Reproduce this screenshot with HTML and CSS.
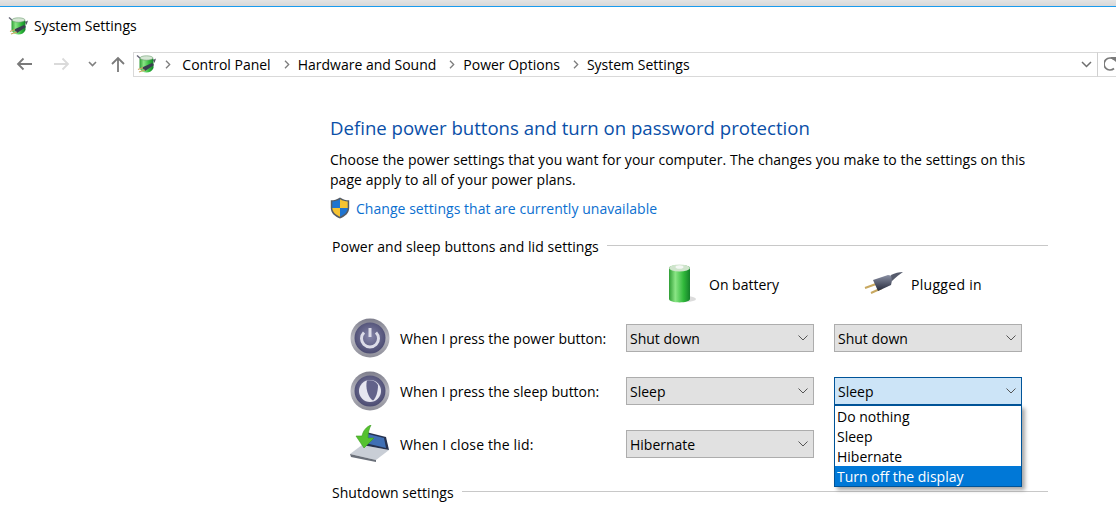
FILE: index.html
```html
<!DOCTYPE html>
<html lang="en">
<head>
    <meta charset="UTF-8">
    <title>System Settings</title>
    <link rel="stylesheet" href="styles.css">
</head>
<body>
    <svg class="defs" width="0" height="0">
        <defs>
            <linearGradient id="green" x1="0" x2="1" y1="0" y2="0">
                <stop offset="0" stop-color="#2f9e35"/>
                <stop offset="0.3" stop-color="#8ae585"/>
                <stop offset="0.7" stop-color="#2fb83a"/>
                <stop offset="1" stop-color="#14802a"/>
            </linearGradient>
            <linearGradient id="ring" x1="0" x2="0" y1="0" y2="1">
                <stop offset="0" stop-color="#7e7e8c"/>
                <stop offset="0.5" stop-color="#b8b8c0"/>
                <stop offset="1" stop-color="#8d8d98"/>
            </linearGradient>
            <radialGradient id="disc" cx="0.5" cy="0.45" r="0.6">
                <stop offset="0" stop-color="#8686aa"/>
                <stop offset="1" stop-color="#46466c"/>
            </radialGradient>
            <linearGradient id="plug" x1="0" x2="0" y1="0" y2="1">
                <stop offset="0" stop-color="#8a90a4"/>
                <stop offset="1" stop-color="#262a3a"/>
            </linearGradient>
            <symbol id="app-icon" viewBox="0 0 20 20">
                <path d="M1 1.500 L5 5" stroke="#667" stroke-width="1.400" fill="none"/>
                <path d="M3.500 5 C6 2 15 2 17.500 5 L17.500 14 C15 20 6 20 3.500 14 Z" fill="url(#green)"/>
                <ellipse cx="10.500" cy="4" rx="6.500" ry="2.200" fill="#d5e6d4" stroke="#6b9c6e" stroke-width="0.600"/>
                <path d="M17 6 L20 4.500 L18.500 9 Z" fill="#556"/>
                <path d="M6 13.500 L16 9 L18 11 L9 17 Z" fill="#3a3f50"/>
                <path d="M2 15.500 L7 13.500 M3 18 L9 16" stroke="#c9a860" stroke-width="1.300"/>
            </symbol>
        </defs>
    </svg>

    <div class="top-edge"></div>

    <div class="title-row">
        <svg class="app-icon" width="20" height="20"><use href="#app-icon"/></svg>
        <span>System Settings</span>
    </div>

    <div class="nav-row">
        <div class="nav-buttons">
            <svg class="nav-back" width="16" height="14" viewBox="0 0 16 14"><path d="M16 7H2M7.500 1.500 2 7l5.500 5.500" fill="none" stroke="#7a7a7a" stroke-width="1.800"/></svg>
            <svg class="nav-forward" width="16" height="14" viewBox="0 0 16 14"><path d="M0 7H14M8.500 1.500 14 7l-5.500 5.500" fill="none" stroke="#dadada" stroke-width="1.800"/></svg>
            <svg class="nav-down" width="9" height="6" viewBox="0 0 9 6"><path d="M1 1l3.500 3.500L8 1" fill="none" stroke="#808080" stroke-width="1.600"/></svg>
            <svg class="nav-up" width="14" height="16" viewBox="0 0 14 16"><path d="M7 16V2M1 8l6-6 6 6" fill="none" stroke="#7a7a7a" stroke-width="1.800"/></svg>
        </div>
        <div class="address">
            <svg class="address-icon" width="20" height="20"><use href="#app-icon"/></svg>
            <svg class="crumb-sep first" width="6" height="9" viewBox="0 0 6 9"><path d="M1 .7l3.700 3.800L1 8.300" fill="none" stroke="#7d7d7d" stroke-width="1.300"/></svg>
            <span class="crumb">Control Panel</span>
            <svg class="crumb-sep" width="6" height="9" viewBox="0 0 6 9"><path d="M1 .7l3.700 3.800L1 8.300" fill="none" stroke="#7d7d7d" stroke-width="1.300"/></svg>
            <span class="crumb">Hardware and Sound</span>
            <svg class="crumb-sep" width="6" height="9" viewBox="0 0 6 9"><path d="M1 .7l3.700 3.800L1 8.300" fill="none" stroke="#7d7d7d" stroke-width="1.300"/></svg>
            <span class="crumb">Power Options</span>
            <svg class="crumb-sep" width="6" height="9" viewBox="0 0 6 9"><path d="M1 .7l3.700 3.800L1 8.300" fill="none" stroke="#7d7d7d" stroke-width="1.300"/></svg>
            <span class="crumb">System Settings</span>
            <svg class="address-chevron" width="11" height="7" viewBox="0 0 11 7"><path d="M1 1l4.500 4.500L10 1" fill="none" stroke="#6e6e6e" stroke-width="1.500"/></svg>
        </div>
        <div class="refresh">
            <svg width="12" height="16" viewBox="0 0 12 16"><path d="M10 3.500A6 6 0 1 0 10 12.500" fill="none" stroke="#7a7a7a" stroke-width="1.700"/><path d="M6 1h6v5z" fill="#7a7a7a"/></svg>
        </div>
    </div>

    <div class="content">
        <h1>Define power buttons and turn on password protection</h1>
        <p class="intro">Choose the power settings that you want for your computer. The changes you make to the settings on this<br>page apply to all of your power plans.</p>
        <div class="change-link">
            <svg width="20" height="22" viewBox="0 0 20 22">
                <path d="M10 .5C7 2.500 4 3.300 .8 3.300V11c0 5 4 8.500 9.200 10.500C15.200 19.500 19.200 16 19.200 11V3.300C16 3.300 13 2.500 10 .5Z" fill="#555c66"/>
                <path d="M10 2.300V11H2.300V4.600C5 4.400 7.600 3.700 10 2.300Z" fill="#1f74d0"/>
                <path d="M10 2.300C12.400 3.700 15 4.400 17.700 4.600V11H10Z" fill="#f7c331"/>
                <path d="M2.300 11H10V19.700C5.600 17.800 2.500 15 2.300 11Z" fill="#f7c331"/>
                <path d="M10 11H17.700C17.500 15 14.400 17.800 10 19.700Z" fill="#1f74d0"/>
            </svg>
            <a>Change settings that are currently unavailable</a>
        </div>

        <div class="section-title"><span>Power and sleep buttons and lid settings</span><i></i></div>

        <div class="plan-heads">
            <div class="plan-head battery">
                <svg width="28" height="40" viewBox="0 0 28 40">
                    <ellipse cx="18" cy="35" rx="10" ry="3" fill="#dcdcdc"/>
                    <path d="M1 4C1 0 22 0 22 4V35C22 39.500 1 39.500 1 35Z" fill="url(#green)"/>
                    <ellipse cx="11.500" cy="4" rx="10.500" ry="3.500" fill="#cfe4cc"/>
                    <ellipse cx="11.500" cy="3" rx="4" ry="1.800" fill="#f4f7f4"/>
                </svg>
                <span>On battery</span>
            </div>
            <div class="plan-head plugged">
                <svg width="40" height="26" viewBox="0 0 40 26">
                    <path d="M1 17L12 13M7 22L18 17" stroke="#c8a860" stroke-width="2"/>
                    <path d="M9 9L24 4L29 5L27 14L14 20Z" fill="url(#plug)"/>
                    <path d="M27 4C31 2 35 1 39 1C36 3 32 6 28 10Z" fill="#565b6c"/>
                </svg>
                <span>Plugged in</span>
            </div>
        </div>

        <div class="setting-row">
            <svg class="row-icon" width="40" height="40" viewBox="0 0 40 40">
                <circle cx="20" cy="20" r="19.500" fill="url(#ring)"/>
                <circle cx="20" cy="20" r="15.500" fill="url(#disc)"/>
                <path d="M14 14.500A8.500 8.500 0 1 0 26 14.500" fill="none" stroke="#dcdce8" stroke-width="3"/>
                <path d="M20 10V19" stroke="#dcdce8" stroke-width="3"/>
            </svg>
            <label>When I press the power button:</label>
            <div class="combo">Shut down<svg width="10" height="6" viewBox="0 0 10 6"><path d="M.500.500l4.500 4.500 4.500-4.500" fill="none" stroke="#555" stroke-width="1"/></svg></div>
            <div class="combo">Shut down<svg width="10" height="6" viewBox="0 0 10 6"><path d="M.500.500l4.500 4.500 4.500-4.500" fill="none" stroke="#555" stroke-width="1"/></svg></div>
        </div>

        <div class="setting-row">
            <svg class="row-icon" width="40" height="40" viewBox="0 0 40 40">
                <circle cx="20" cy="20" r="19.500" fill="url(#ring)"/>
                <circle cx="20" cy="20" r="15.500" fill="url(#disc)"/>
                <circle cx="20" cy="20" r="11" fill="#e6e6f0"/>
                <path d="M17 9.500C22 8.500 26 10 28 14C28 21 26 27 23 29.500C18 27 15 16 17 9.500Z" fill="#62628a"/>
            </svg>
            <label>When I press the sleep button:</label>
            <div class="combo">Sleep<svg width="10" height="6" viewBox="0 0 10 6"><path d="M.500.500l4.500 4.500 4.500-4.500" fill="none" stroke="#555" stroke-width="1"/></svg></div>
            <div class="combo-wrap">
                <div class="combo open">Sleep<svg width="10" height="6" viewBox="0 0 10 6"><path d="M.500.500l4.500 4.500 4.500-4.500" fill="none" stroke="#555" stroke-width="1"/></svg></div>
                <ul class="combo-list">
                    <li>Do nothing</li>
                    <li>Sleep</li>
                    <li>Hibernate</li>
                    <li class="selected">Turn off the display</li>
                </ul>
            </div>
        </div>

        <div class="setting-row last">
            <svg class="row-icon" width="40" height="38" viewBox="0 0 40 38">
                <path d="M0 29L26 35L39 25L12 20Z" fill="#c9ced6"/>
                <path d="M0 29L26 35V37L1 32Z" fill="#6a6f79"/>
                <path d="M12 20L16 7L36 12L39 25Z" fill="#26324f"/>
                <path d="M15 18L18 9L34 13L36 23Z" fill="#3f6fb4"/>
                <path d="M21 0C16 2 13 6 12 11H6L14 23L24 13H18C18 8 19 4 21 0Z" fill="#55c22e" stroke="#3c9a22" stroke-width="0.600"/>
            </svg>
            <label class="lid-label">When I close the lid:</label>
            <div class="combo">Hibernate<svg width="10" height="6" viewBox="0 0 10 6"><path d="M.500.500l4.500 4.500 4.500-4.500" fill="none" stroke="#555" stroke-width="1"/></svg></div>
        </div>

        <div class="section-title shutdown"><span>Shutdown settings</span><i></i></div>
    </div>
</body>
</html>
```

FILE: styles.css
```css
html, body {
    height: 100%;
}
body {
    margin: 0;
    background: #fff;
    color: #000;
    font-family: "Open Sans", "Noto Sans", sans-serif;
    font-size: 14px;
    overflow: hidden;
}
.defs {
    position: absolute;
}
svg {
    display: block;
    flex: none;
}
.top-edge {
    height: 6px;
    background: linear-gradient(#e4e4e4, #d8d8d8);
    border-bottom: 1px solid #1a9bee;
}
.title-row {
    display: flex;
    align-items: center;
    gap: 6px;
    height: 37px;
    padding-left: 8px;
    font-size: 14px;
}
.nav-row {
    display: flex;
    align-items: center;
    height: 26px;
    margin-top: 7px;
    padding-left: 16px;
}
.nav-buttons {
    display: flex;
    align-items: center;
    width: 118px;
}
.nav-forward {
    margin-left: 22px;
}
.nav-down {
    margin-left: 18px;
}
.nav-up {
    margin-left: 14px;
}
.address {
    display: flex;
    align-items: center;
    width: 970px;
    height: 25px;
    padding-left: 2px;
    box-sizing: border-box;
    border: 1px solid #d9d9d9;
    border-right: 1px solid #d0d0d0;
}
.address-icon {
    margin-right: 9px;
}
.crumb-sep {
    margin-right: 8px;
    margin-left: 13px;
}
.crumb-sep.first {
    margin-left: 0;
    margin-right: 11px;
}
.crumb {
    white-space: nowrap;
}
.address-chevron {
    margin-left: auto;
    margin-right: 5px;
}
.refresh {
    display: flex;
    align-items: center;
    height: 25px;
    padding-left: 6px;
    border-top: 1px solid #d9d9d9;
    border-bottom: 1px solid #d9d9d9;
    box-sizing: border-box;
}
.content {
    margin: 0 68px 0 330px;
}
h1 {
    margin: 39px 0 0;
    font-size: 18.600px;
    font-weight: 400;
    line-height: 24px;
    color: #0a4fa8;
}
.intro {
    margin: 10px 0 0;
    line-height: 20px;
    letter-spacing: 0.04px;
}
.change-link {
    display: flex;
    align-items: center;
    gap: 6px;
    height: 22px;
    margin-top: 7px;
}
.change-link a {
    color: #0b6fd0;
    letter-spacing: 0.04px;
}
.section-title {
    display: flex;
    align-items: center;
    gap: 8px;
    margin-top: 18px;
    padding-left: 2px;
    line-height: 20px;
    letter-spacing: 0.05px;
}
.section-title i {
    flex: 1;
    height: 1px;
    margin-bottom: 4px;
    background: #c8c8c8;
}
.section-title.shutdown {
    margin-top: 25px;
}
.plan-heads {
    display: flex;
    height: 40px;
    margin-top: 7px;
}
.plan-head {
    display: flex;
    align-items: center;
}
.battery {
    gap: 13px;
    width: 196px;
    margin-left: 338px;
}
.plugged {
    gap: 7px;
    letter-spacing: 0.3px;
}
.setting-row {
    display: flex;
    align-items: center;
    height: 28px;
    margin-top: 25px;
    padding-left: 20px;
}
.plan-heads + .setting-row {
    margin-top: 20px;
}
.row-icon {
    margin-right: 10px;
}
label {
    width: 226px;
}
.lid-label {
    letter-spacing: 0.15px;
}
.combo {
    display: flex;
    align-items: center;
    justify-content: space-between;
    width: 188px;
    height: 28px;
    box-sizing: border-box;
    padding: 0 4px 0 3px;
    margin-right: 20px;
    border: 1px solid #adadad;
    background: #e1e1e1;
}
.combo svg {
    margin-right: 1px;
}
.combo-wrap {
    position: relative;
}
.combo.open {
    margin-right: 0;
    border-color: #005499;
    background: #cce4f7;
}
.combo-list {
    position: absolute;
    left: 0;
    top: 28px;
    z-index: 5;
    width: 188px;
    margin: 0;
    padding: 0;
    box-sizing: border-box;
    list-style: none;
    background: #fff;
    border: 1px solid #005499;
    box-shadow: 3px 3px 4px rgba(0, 0, 0, 0.35);
}
.combo-list li {
    height: 20px;
    line-height: 22px;
    padding-left: 2px;
}
.combo-list .selected {
    background: #0078d7;
    color: #fff;
}
```
